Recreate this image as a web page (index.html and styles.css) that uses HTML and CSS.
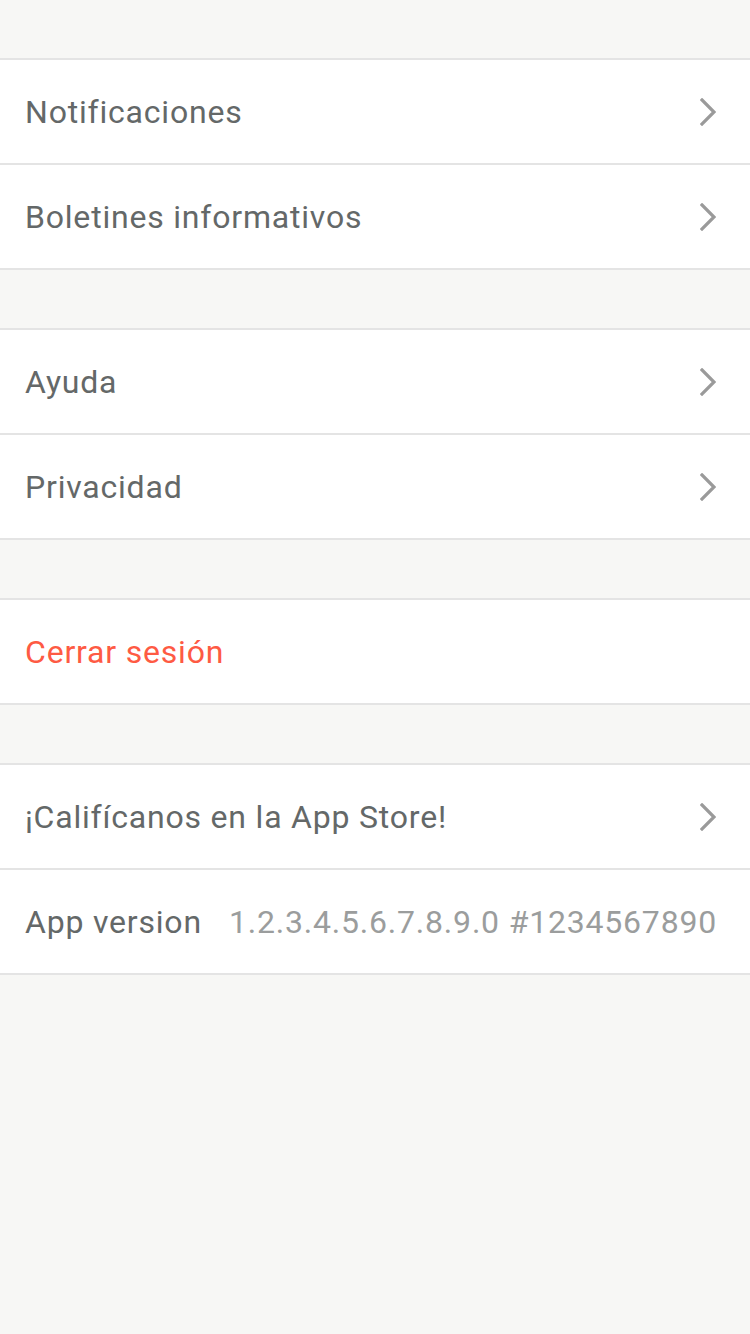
FILE: index.html
```html
<!DOCTYPE html>
<html lang="es">
<head>
<meta charset="utf-8">
<link rel="stylesheet" href="styles.css">
</head>
<body>
<div class="page">
  <section class="group">
    <div class="row"><span class="label">Notificaciones</span><svg class="chev" viewBox="0 0 16 28"><path d="M2 2 L14 14 L2 26"/></svg></div>
    <div class="row"><span class="label">Boletines informativos</span><svg class="chev" viewBox="0 0 16 28"><path d="M2 2 L14 14 L2 26"/></svg></div>
  </section>
  <section class="group">
    <div class="row"><span class="label">Ayuda</span><svg class="chev" viewBox="0 0 16 28"><path d="M2 2 L14 14 L2 26"/></svg></div>
    <div class="row"><span class="label">Privacidad</span><svg class="chev" viewBox="0 0 16 28"><path d="M2 2 L14 14 L2 26"/></svg></div>
  </section>
  <section class="group">
    <div class="row"><span class="label danger">Cerrar sesión</span></div>
  </section>
  <section class="group">
    <div class="row"><span class="label">¡Califícanos en la App Store!</span><svg class="chev" viewBox="0 0 16 28"><path d="M2 2 L14 14 L2 26"/></svg></div>
    <div class="row"><span class="label">App version</span><span class="value">1.2.3.4.5.6.7.8.9.0 #1234567890</span></div>
  </section>
</div>
</body>
</html>
```
FILE: styles.css
```css
html, body {
  margin: 0;
  padding: 0;
  background: #f7f7f5;
}
body {
  font-family: Roboto, "Liberation Sans", sans-serif;
}
.page {
  width: 750px;
  min-height: 1334px;
  display: flex;
  flex-direction: column;
  gap: 58px;
  padding-top: 58px;
  box-sizing: border-box;
}
.group {
  background: #fff;
  border-top: 2px solid #e4e4e4;
}
.row {
  height: 103px;
  border-bottom: 2px solid #e4e4e4;
  display: flex;
  align-items: center;
  padding: 0 34px 0 25px;
}
.label {
  font-size: 32px;
  letter-spacing: 0.8px;
  color: #646868;
  flex: 0 0 auto;
}
.label.danger {
  color: #fe5a43;
}
.chev {
  margin-left: auto;
  width: 16px;
  height: 28px;
  fill: none;
  stroke: #9a9a9a;
  stroke-width: 3.2;
  stroke-linecap: square;
}
.value {
  margin-left: auto;
  font-size: 32px;
  letter-spacing: 0.8px;
  color: #9b9d9d;
  margin-right: -1px;
}
```
